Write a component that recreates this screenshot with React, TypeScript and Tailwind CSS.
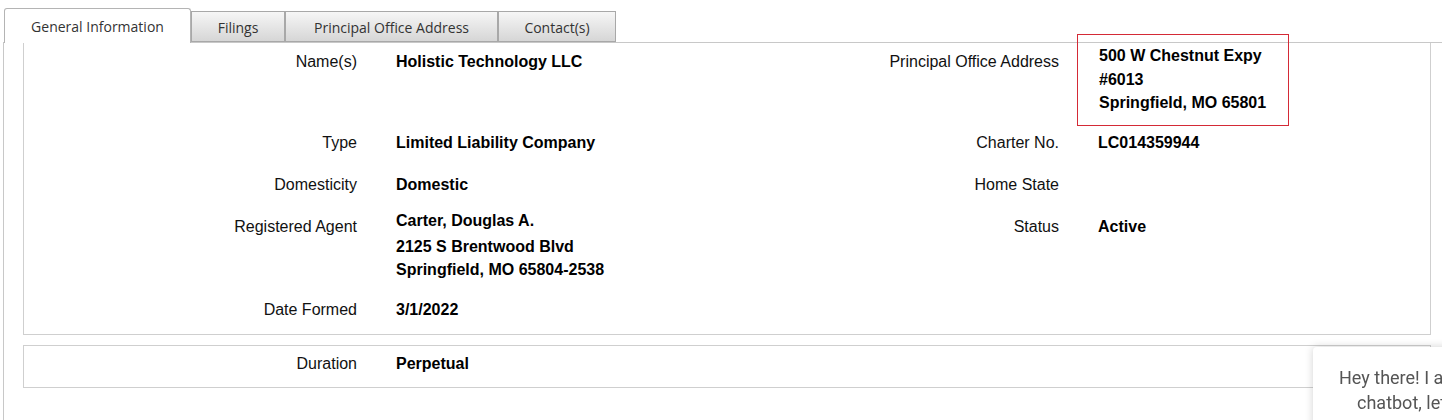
const tabs = [
  { label: "General Information", w: "w-[187px]", active: true },
  { label: "Filings", w: "w-[94px]", active: false },
  { label: "Principal Office Address", w: "w-[213px]", active: false },
  { label: "Contact(s)", w: "w-[118px]", active: false },
];

function Label({ children }: { children: React.ReactNode }) {
  return <div className="text-right text-[16px] leading-5 text-[#111]">{children}</div>;
}

function Value({ children }: { children?: React.ReactNode }) {
  return <div className="pl-[39px] text-[16px] leading-5 font-bold text-black">{children}</div>;
}

export default function App() {
  return (
    <div className="min-h-[420px] bg-white font-['Liberation_Sans',Arial,sans-serif] overflow-hidden">
      <div className="pt-2 pl-[3px]">
        {/* tabs */}
        <div className="flex items-end pl-px">
          {tabs.map((t) =>
            t.active ? (
              <div
                key={t.label}
                className={`${t.w} relative z-10 -mb-px flex h-[35px] items-center justify-center rounded-t-[3px] border border-b-0 border-[#b4b4b4] bg-white font-['Open_Sans',sans-serif] text-[14px] text-[#333]`}
              >
                {t.label}
              </div>
            ) : (
              <div
                key={t.label}
                className={`${t.w} flex h-[31px] items-center justify-center border border-[#a8a8a8] bg-gradient-to-b from-[#f6f6f6] via-[#e6e6e6] to-[#d6d6d6] pt-[2px] font-['Open_Sans',sans-serif] text-[14px] text-[#333]`}
              >
                {t.label}
              </div>
            )
          )}
        </div>

        {/* content frame */}
        <div className="min-h-[378px] border-l border-t border-[#c8c8c8] pl-[19px] pr-[11px]">
          <div className="border-x border-b border-[#cfcfcf] pt-[9px] pb-[14px]">
            <div className="grid grid-cols-[333px_369px_333px_1fr]">
              {/* row 1 */}
              <div className="h-[81px]">
                <Label>Name(s)</Label>
              </div>
              <Value>Holistic Technology LLC</Value>
              <Label>Principal Office Address</Label>
              <div className="pl-[18px]">
                <div className="-mt-[18px] w-[212px] border border-[#d42a36] pt-[9px] pb-[10px] pl-[21px] text-[16px] leading-[23.5px] font-bold text-black">
                  <div>500 W Chestnut Expy</div>
                  <div>#6013</div>
                  <div>Springfield, MO 65801</div>
                </div>
              </div>

              {/* row 2 */}
              <div className="h-[42px]">
                <Label>Type</Label>
              </div>
              <Value>Limited Liability Company</Value>
              <Label>Charter No.</Label>
              <Value>LC014359944</Value>

              {/* row 3 */}
              <div className="h-[42px]">
                <Label>Domesticity</Label>
              </div>
              <Value>Domestic</Value>
              <Label>Home State</Label>
              <Value />

              {/* row 4 */}
              <div className="h-[83px]">
                <Label>Registered Agent</Label>
              </div>
              <div className="-mt-[6px] pl-[39px] text-[16px] font-bold text-black">
                <div className="leading-5 mb-[4px]">Carter, Douglas A.</div>
                <div className="leading-[23px]">2125 S Brentwood Blvd</div>
                <div className="leading-[23px]">Springfield, MO 65804-2538</div>
              </div>
              <Label>Status</Label>
              <Value>Active</Value>

              {/* row 5 */}
              <Label>Date Formed</Label>
              <Value>3/1/2022</Value>
              <div />
              <div />
            </div>
          </div>

          <div className="mt-[10px] border border-[#cfcfcf] pt-[8px] pb-[13px]">
            <div className="grid grid-cols-[333px_369px_333px_1fr]">
              <Label>Duration</Label>
              <Value>Perpetual</Value>
              <div />
              <div />
            </div>
          </div>
        </div>
      </div>

      {/* chatbot bubble, partly off-screen as in the reference */}
      <div className="fixed left-[1313px] top-[347px] h-[120px] w-[260px] rounded-tl-[4px] bg-white pt-[18px] font-['Roboto',sans-serif] text-[18px] leading-[25px] text-[#555] shadow-[0_0_8px_rgba(0,0,0,0.18)]">
        <div className="pl-[26px] whitespace-nowrap">Hey there! I am an AI</div>
        <div className="pl-[44px] whitespace-nowrap">chatbot, let me help you.</div>
      </div>
    </div>
  );
}
